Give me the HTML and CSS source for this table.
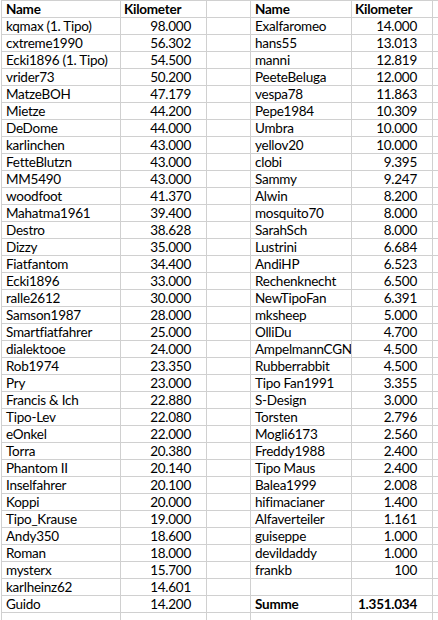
FILE: index.html
```html
<!DOCTYPE html>
<html>
<head>
<meta charset="utf-8">
<link rel="stylesheet" href="styles.css">
</head>
<body>
<div class="sheet">
<div class="row head"><div class="c n">Name</div><div class="c k l">Kilometer</div><div class="c g"></div><div class="c n">Name</div><div class="c k l">Kilometer</div><div class="c e"></div></div>
<div class="row"><div class="c n">kqmax (1. Tipo)</div><div class="c k">98.000</div><div class="c g"></div><div class="c n">Exalfaromeo</div><div class="c k">14.000</div><div class="c e"></div></div>
<div class="row"><div class="c n">cxtreme1990</div><div class="c k">56.302</div><div class="c g"></div><div class="c n">hans55</div><div class="c k">13.013</div><div class="c e"></div></div>
<div class="row"><div class="c n">Ecki1896 (1. Tipo)</div><div class="c k">54.500</div><div class="c g"></div><div class="c n">manni</div><div class="c k">12.819</div><div class="c e"></div></div>
<div class="row"><div class="c n">vrider73</div><div class="c k">50.200</div><div class="c g"></div><div class="c n">PeeteBeluga</div><div class="c k">12.000</div><div class="c e"></div></div>
<div class="row"><div class="c n">MatzeBOH</div><div class="c k">47.179</div><div class="c g"></div><div class="c n">vespa78</div><div class="c k">11.863</div><div class="c e"></div></div>
<div class="row"><div class="c n">Mietze</div><div class="c k">44.200</div><div class="c g"></div><div class="c n">Pepe1984</div><div class="c k">10.309</div><div class="c e"></div></div>
<div class="row"><div class="c n">DeDome</div><div class="c k">44.000</div><div class="c g"></div><div class="c n">Umbra</div><div class="c k">10.000</div><div class="c e"></div></div>
<div class="row"><div class="c n">karlinchen</div><div class="c k">43.000</div><div class="c g"></div><div class="c n">yellov20</div><div class="c k">10.000</div><div class="c e"></div></div>
<div class="row"><div class="c n">FetteBlutzn</div><div class="c k">43.000</div><div class="c g"></div><div class="c n">clobi</div><div class="c k">9.395</div><div class="c e"></div></div>
<div class="row"><div class="c n">MM5490</div><div class="c k">43.000</div><div class="c g"></div><div class="c n">Sammy</div><div class="c k">9.247</div><div class="c e"></div></div>
<div class="row"><div class="c n">woodfoot</div><div class="c k">41.370</div><div class="c g"></div><div class="c n">Alwin</div><div class="c k">8.200</div><div class="c e"></div></div>
<div class="row"><div class="c n">Mahatma1961</div><div class="c k">39.400</div><div class="c g"></div><div class="c n">mosquito70</div><div class="c k">8.000</div><div class="c e"></div></div>
<div class="row"><div class="c n">Destro</div><div class="c k">38.628</div><div class="c g"></div><div class="c n">SarahSch</div><div class="c k">8.000</div><div class="c e"></div></div>
<div class="row"><div class="c n">Dizzy</div><div class="c k">35.000</div><div class="c g"></div><div class="c n">Lustrini</div><div class="c k">6.684</div><div class="c e"></div></div>
<div class="row"><div class="c n">Fiatfantom</div><div class="c k">34.400</div><div class="c g"></div><div class="c n">AndiHP</div><div class="c k">6.523</div><div class="c e"></div></div>
<div class="row"><div class="c n">Ecki1896</div><div class="c k">33.000</div><div class="c g"></div><div class="c n">Rechenknecht</div><div class="c k">6.500</div><div class="c e"></div></div>
<div class="row"><div class="c n">ralle2612</div><div class="c k">30.000</div><div class="c g"></div><div class="c n">NewTipoFan</div><div class="c k">6.391</div><div class="c e"></div></div>
<div class="row"><div class="c n">Samson1987</div><div class="c k">28.000</div><div class="c g"></div><div class="c n">mksheep</div><div class="c k">5.000</div><div class="c e"></div></div>
<div class="row"><div class="c n">Smartfiatfahrer</div><div class="c k">25.000</div><div class="c g"></div><div class="c n">OlliDu</div><div class="c k">4.700</div><div class="c e"></div></div>
<div class="row"><div class="c n">dialektooe</div><div class="c k">24.000</div><div class="c g"></div><div class="c n">AmpelmannCGN</div><div class="c k">4.500</div><div class="c e"></div></div>
<div class="row"><div class="c n">Rob1974</div><div class="c k">23.350</div><div class="c g"></div><div class="c n">Rubberrabbit</div><div class="c k">4.500</div><div class="c e"></div></div>
<div class="row"><div class="c n">Pry</div><div class="c k">23.000</div><div class="c g"></div><div class="c n">Tipo Fan1991</div><div class="c k">3.355</div><div class="c e"></div></div>
<div class="row"><div class="c n">Francis &amp; Ich</div><div class="c k">22.880</div><div class="c g"></div><div class="c n">S-Design</div><div class="c k">3.000</div><div class="c e"></div></div>
<div class="row"><div class="c n">Tipo-Lev</div><div class="c k">22.080</div><div class="c g"></div><div class="c n">Torsten</div><div class="c k">2.796</div><div class="c e"></div></div>
<div class="row"><div class="c n">eOnkel</div><div class="c k">22.000</div><div class="c g"></div><div class="c n">Mogli6173</div><div class="c k">2.560</div><div class="c e"></div></div>
<div class="row"><div class="c n">Torra</div><div class="c k">20.380</div><div class="c g"></div><div class="c n">Freddy1988</div><div class="c k">2.400</div><div class="c e"></div></div>
<div class="row"><div class="c n">Phantom II</div><div class="c k">20.140</div><div class="c g"></div><div class="c n">Tipo Maus</div><div class="c k">2.400</div><div class="c e"></div></div>
<div class="row"><div class="c n">Inselfahrer</div><div class="c k">20.100</div><div class="c g"></div><div class="c n">Balea1999</div><div class="c k">2.008</div><div class="c e"></div></div>
<div class="row"><div class="c n">Koppi</div><div class="c k">20.000</div><div class="c g"></div><div class="c n">hifimacianer</div><div class="c k">1.400</div><div class="c e"></div></div>
<div class="row"><div class="c n">Tipo_Krause</div><div class="c k">19.000</div><div class="c g"></div><div class="c n">Alfaverteiler</div><div class="c k">1.161</div><div class="c e"></div></div>
<div class="row"><div class="c n">Andy350</div><div class="c k">18.600</div><div class="c g"></div><div class="c n">guiseppe</div><div class="c k">1.000</div><div class="c e"></div></div>
<div class="row"><div class="c n">Roman</div><div class="c k">18.000</div><div class="c g"></div><div class="c n">devildaddy</div><div class="c k">1.000</div><div class="c e"></div></div>
<div class="row"><div class="c n">mysterx</div><div class="c k">15.700</div><div class="c g"></div><div class="c n">frankb</div><div class="c k">100</div><div class="c e"></div></div>
<div class="row"><div class="c n">karlheinz62</div><div class="c k">14.601</div><div class="c g"></div><div class="c n"></div><div class="c k"></div><div class="c e"></div></div>
<div class="row"><div class="c n">Guido</div><div class="c k">14.200</div><div class="c g"></div><div class="c n b">Summe</div><div class="c k b">1.351.034</div><div class="c e"></div></div>
<div class="row"><div class="c n"></div><div class="c k"></div><div class="c g"></div><div class="c n"></div><div class="c k"></div><div class="c e"></div></div>
</div>
</body>
</html>
```
FILE: styles.css
```css
html, body {
  margin: 0;
  padding: 0;
  background: #ffffff;
}
body {
  font-family: Lato, "Open Sans", sans-serif;
  font-size: 13.5px;
  letter-spacing: -0.25px;
  color: #000;
  overflow: hidden;
}
.sheet {
  margin-left: 1px;
  border-left: 1px solid #d0d0d0;
  border-top: 1px solid #d0d0d0;
  width: 437px;
}
.row {
  display: grid;
  grid-template-columns: 119px 86px 44px 101px 81px 6px;
  height: 17px;
}
.c {
  box-sizing: border-box;
  border-right: 1px solid #d0d0d0;
  border-bottom: 1px solid #d0d0d0;
  height: 17px;
  line-height: 16px;
  white-space: nowrap;
  overflow: hidden;
}
.n {
  padding-left: 4px;
}
.k {
  text-align: right;
  padding-right: 15px;
}
.k.l {
  text-align: left;
  padding-left: 3px;
  padding-right: 0;
}
.head .c, .b {
  font-weight: bold;
}
.e {
  border-right: none;
}
```
